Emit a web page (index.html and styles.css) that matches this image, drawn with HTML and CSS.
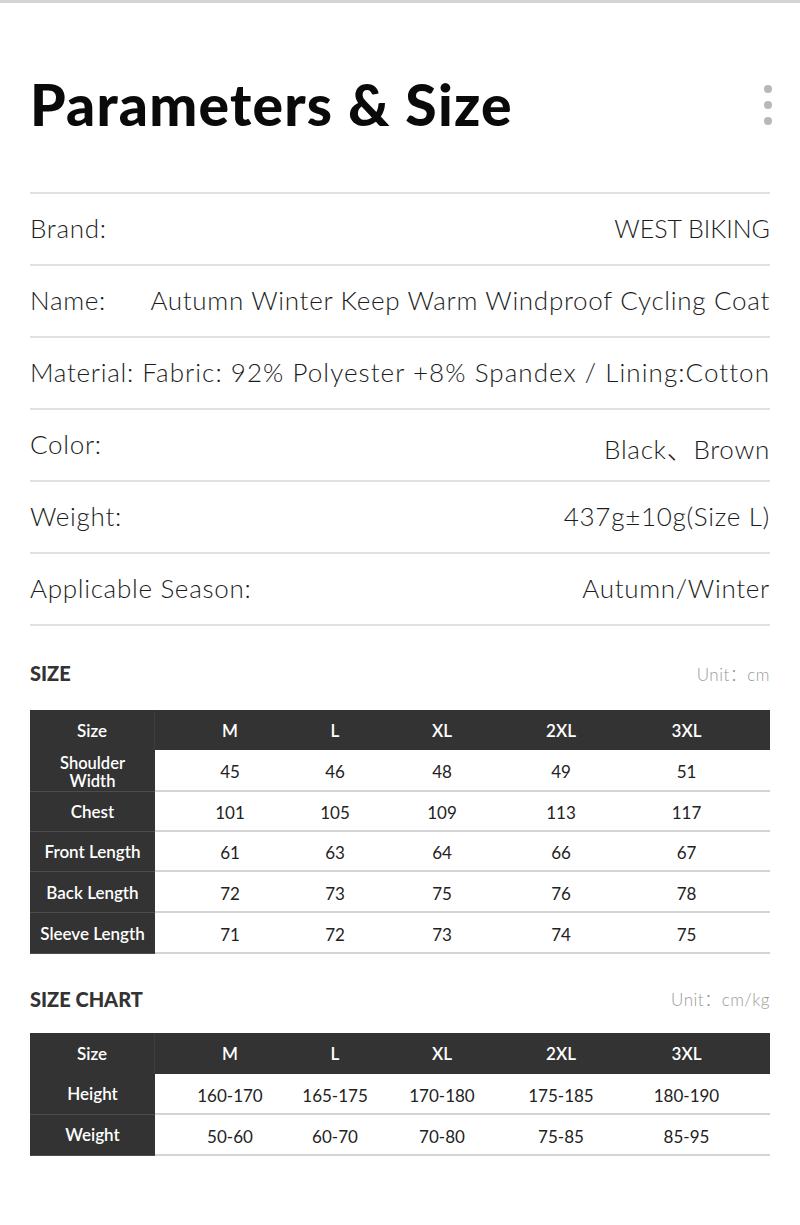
FILE: index.html
```html
<!DOCTYPE html>
<html>
<head>
<meta charset="utf-8">
<link rel="stylesheet" href="styles.css">
</head>
<body>
<div class="topbar"></div>
<div class="page">
  <header class="head">
    <h1 class="title">Parameters &amp; Size</h1>
    <div class="dots"><span></span><span></span><span></span></div>
  </header>

  <ul class="specs">
    <li class="spec"><span>Brand:</span><span class="brand">WEST BIKING</span></li>
    <li class="spec"><span>Name:</span><span>Autumn Winter Keep Warm Windproof Cycling Coat</span></li>
    <li class="spec"><span>Material:</span><span class="wide">Fabric: 92% Polyester +8% Spandex / Lining:Cotton</span></li>
    <li class="spec"><span>Color:</span><span class="low">Black、Brown</span></li>
    <li class="spec"><span>Weight:</span><span>437g±10g(Size L)</span></li>
    <li class="spec"><span>Applicable Season:</span><span>Autumn/Winter</span></li>
  </ul>

  <div class="sec-head sec1">
    <h2>SIZE</h2>
    <span class="unit">Unit：cm</span>
  </div>
  <div class="tbl t1">
    <div class="hc lab">Size</div><div class="hc">M</div><div class="hc">L</div><div class="hc">XL</div><div class="hc">2XL</div><div class="hc">3XL</div>
    <div class="lc two"><span>Shoulder</span><span>Width</span></div><div class="dc">45</div><div class="dc">46</div><div class="dc">48</div><div class="dc">49</div><div class="dc">51</div>
    <div class="lc">Chest</div><div class="dc">101</div><div class="dc">105</div><div class="dc">109</div><div class="dc">113</div><div class="dc">117</div>
    <div class="lc">Front Length</div><div class="dc">61</div><div class="dc">63</div><div class="dc">64</div><div class="dc">66</div><div class="dc">67</div>
    <div class="lc">Back Length</div><div class="dc">72</div><div class="dc">73</div><div class="dc">75</div><div class="dc">76</div><div class="dc">78</div>
    <div class="lc">Sleeve Length</div><div class="dc">71</div><div class="dc">72</div><div class="dc">73</div><div class="dc">74</div><div class="dc">75</div>
  </div>

  <div class="sec-head sec2">
    <h2>SIZE CHART</h2>
    <span class="unit">Unit：cm/kg</span>
  </div>
  <div class="tbl t2">
    <div class="hc lab">Size</div><div class="hc">M</div><div class="hc">L</div><div class="hc">XL</div><div class="hc">2XL</div><div class="hc">3XL</div>
    <div class="lc">Height</div><div class="dc">160-170</div><div class="dc">165-175</div><div class="dc">170-180</div><div class="dc">175-185</div><div class="dc">180-190</div>
    <div class="lc">Weight</div><div class="dc">50-60</div><div class="dc">60-70</div><div class="dc">70-80</div><div class="dc">75-85</div><div class="dc">85-95</div>
  </div>
</div>
</body>
</html>
```

FILE: styles.css
```css
* { box-sizing: border-box; }
html, body { margin: 0; padding: 0; background: #fff; }
body {
  font-family: "Lato", "Noto Sans CJK SC", sans-serif;
  color: #1f1f1f;
  width: 800px;
  height: 1225px;
  overflow: hidden;
}
.topbar { height: 3px; background: #d4d4d4; }
.page { padding: 0 30px 0 30px; }

.head {
  display: flex;
  justify-content: space-between;
  align-items: center;
  height: 189px;
  padding-top: 14px;
}
.title {
  margin: 0;
  font-family: "Lato", sans-serif;
  font-weight: 900;
  font-size: 57px;
  letter-spacing: 1.2px;
  color: #0a0a0a;
  line-height: 1;
}
.dots {
  display: flex;
  flex-direction: column;
  gap: 8px;
  margin-right: -2px;
  margin-top: 0;
}
.dots span {
  width: 8px; height: 8px; border-radius: 50%;
  background: #b8b8b8;
}

.specs { list-style: none; margin: 0; padding: 0; border-top: 2px solid #e1e1e1; }
.spec {
  display: flex;
  justify-content: space-between;
  align-items: center;
  height: 72px;
  border-bottom: 2px solid #e1e1e1;
  font-size: 26px;
  font-weight: 300;
  letter-spacing: 0.7px;
  color: #1c1c1c;
  padding-bottom: 2px;
  white-space: nowrap;
}
.spec .brand { letter-spacing: 0; font-size: 25px; }
.spec .wide { letter-spacing: 1.05px; }
.spec .low { padding-top: 6px; }

.sec-head {
  display: flex;
  justify-content: space-between;
  align-items: center;
}
.sec1 { height: 84px; padding-top: 10px; }
.sec2 { height: 79px; padding-top: 10px; }
.sec-head h2 {
  margin: 0;
  font-size: 20px;
  font-weight: 900;
  color: #333;
}
.unit {
  font-size: 17px;
  font-weight: 300;
  color: #999;
  letter-spacing: 0.5px;
}

.tbl {
  display: grid;
  grid-template-columns: 125px 150px 60px 154px 84px 167px;
  font-size: 17px;
}
.t1 { grid-template-rows: 40px 42px 40px 40px 41px 41px; }
.t2 { grid-template-rows: 41px 41px 41px; }
.hc {
  background: #333;
  color: #fff;
  display: flex;
  align-items: center;
  justify-content: center;
  font-weight: 600;
}
.hc.lab { border-right: 1px solid #3d3d3d; }
.lc {
  background: #333;
  color: #fff;
  font-weight: 600;
  display: flex;
  align-items: center;
  justify-content: center;
  text-align: center;
  border-bottom: 1px solid #4d4d4d;
  white-space: nowrap;
}
.lc.two {
  flex-direction: column;
  font-size: 16.5px;
  line-height: 18px;
  padding-top: 2px;
}
.dc {
  display: flex;
  align-items: center;
  justify-content: center;
  border-bottom: 2px solid #d4d4d4;
  color: #222;
  font-weight: 400;
  white-space: nowrap;
}
.t1 .dc { padding-top: 3px; }
.t2 .dc { padding-top: 4px; }
.t2 .lc { padding-bottom: 2px; }
```
